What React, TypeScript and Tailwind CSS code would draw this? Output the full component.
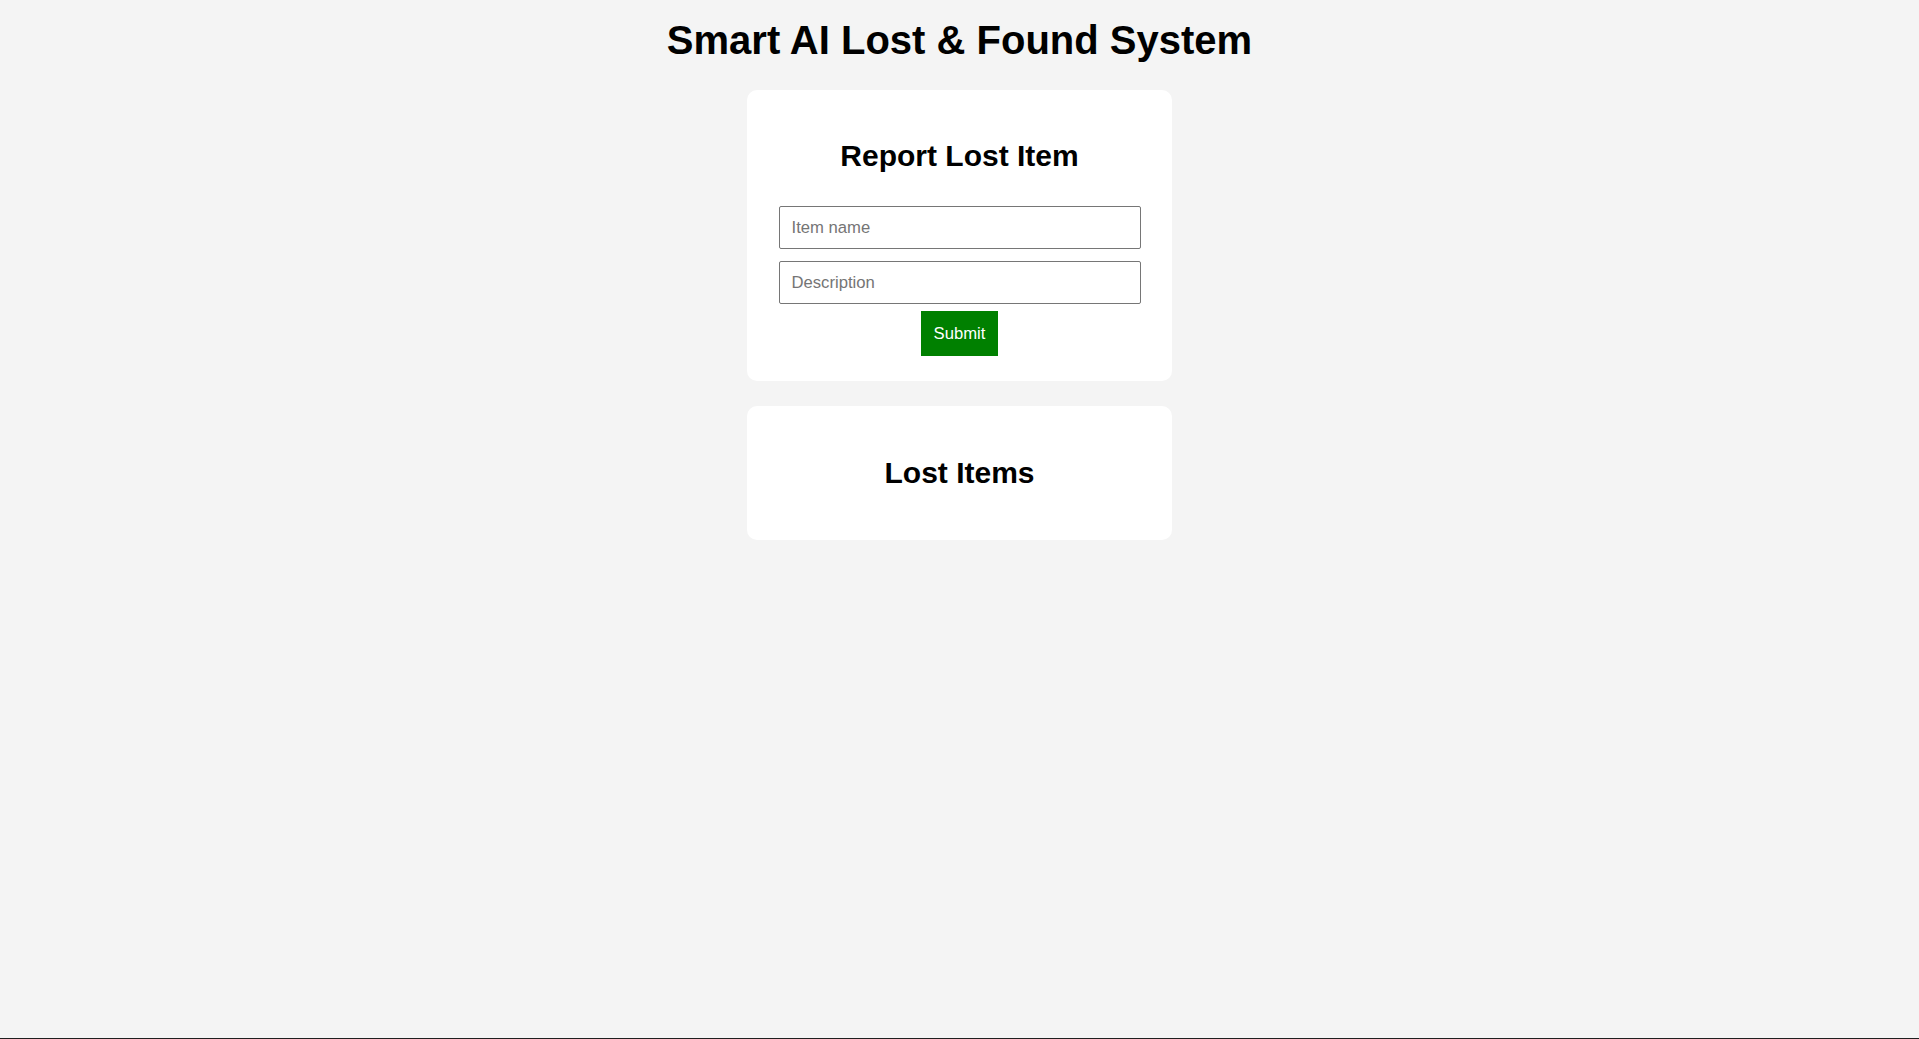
import React, { useState } from 'react';

export default function App() {
  const [name, setName] = useState('');
  const [description, setDescription] = useState('');
  const [items, setItems] = useState<{ name: string; description: string }[]>([]);

  const submit = () => {
    if (!name.trim()) return;
    setItems([...items, { name, description }]);
    setName('');
    setDescription('');
  };

  return (
    <div className="min-h-screen h-[1039px] box-border border-b border-[#1f1f1f] bg-[#f4f4f4] font-['Liberation_Sans',Arial,sans-serif] text-black pt-[17px]">
      <h1 className="text-center text-[40px] leading-[46px] font-bold mb-[27px]">
        Smart AI Lost &amp; Found System
      </h1>

      <div className="w-[425px] mx-auto bg-white rounded-[10px] p-[25px] flex flex-col items-center">
        <h2 className="text-[30px] leading-[34px] font-bold mt-[24px] mb-[27px]">Report Lost Item</h2>
        <input
          value={name}
          onChange={(e) => setName(e.target.value)}
          placeholder="Item name"
          className="w-[362px] h-[43px] my-[6px] border border-[#767676] rounded-[2px] px-[12px] text-[16.67px] placeholder:text-[#757575] outline-none"
        />
        <input
          value={description}
          onChange={(e) => setDescription(e.target.value)}
          placeholder="Description"
          className="w-[362px] h-[43px] my-[6px] border border-[#767676] rounded-[2px] px-[12px] text-[16.67px] placeholder:text-[#757575] outline-none"
        />
        <button
          onClick={submit}
          className="bg-[#008000] text-white text-[16.67px] leading-[20px] px-[12.5px] py-[12.5px] mt-[1px]"
        >
          Submit
        </button>
      </div>

      <div className="w-[425px] mx-auto mt-[25px] bg-white rounded-[10px] p-[25px] flex flex-col items-center">
        <h2 className="text-[30px] leading-[34px] font-bold mt-[25px] mb-[25px]">Lost Items</h2>
        {items.map((item, i) => (
          <div key={i} className="w-full border-b border-gray-200 py-2 text-[16px]">
            <b>{item.name}</b>: {item.description}
          </div>
        ))}
      </div>
    </div>
  );
}
